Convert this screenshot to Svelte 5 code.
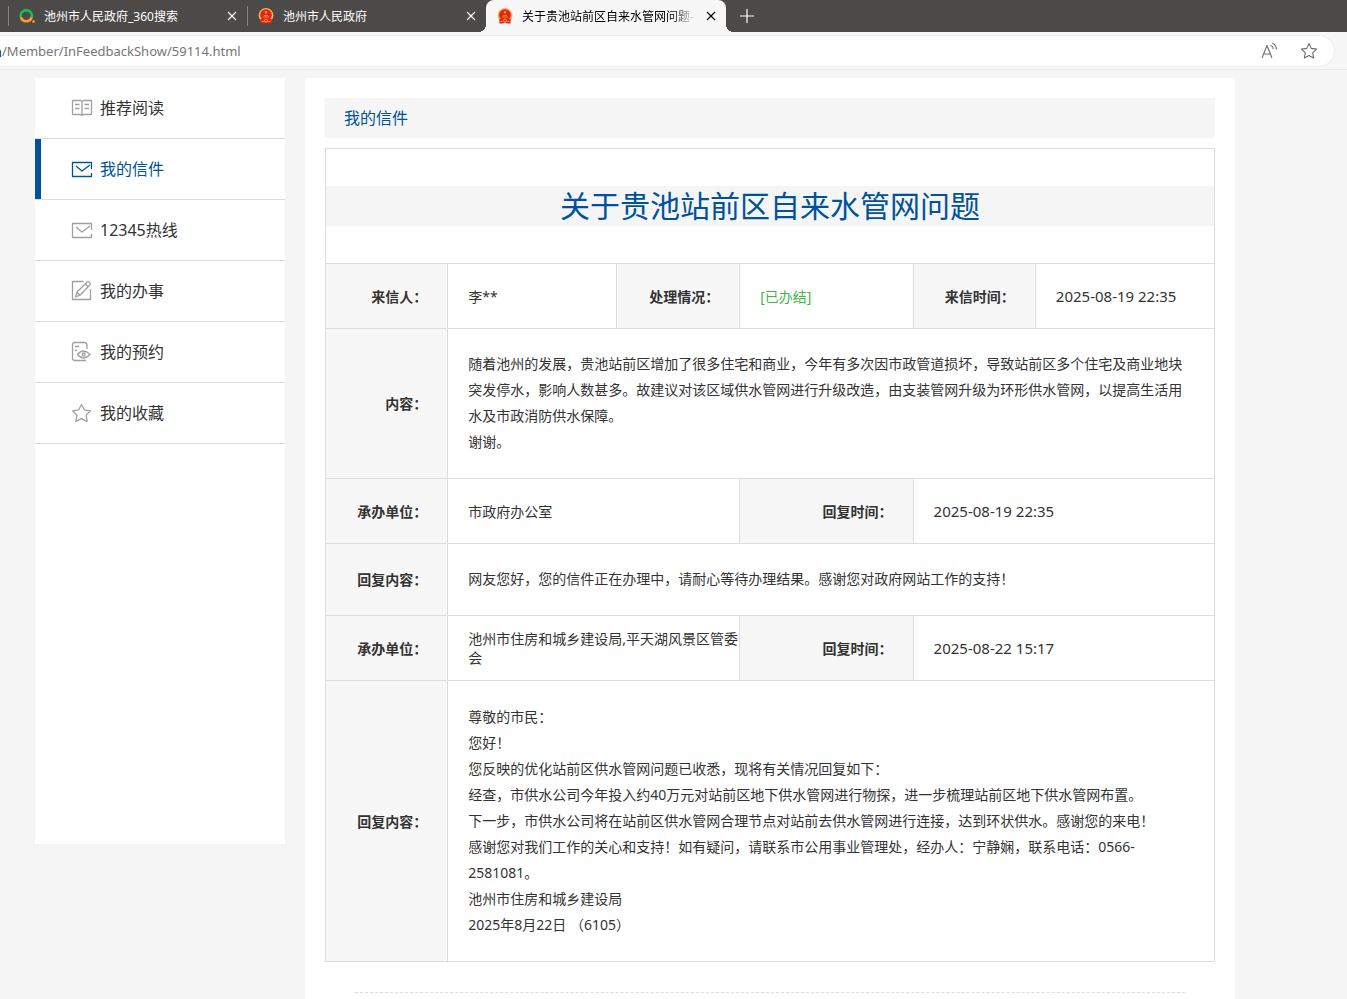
<script>
  const tabs = [
    { title: "池州市人民政府_360搜索", icon: "search" },
    { title: "池州市人民政府", icon: "emblem" },
    { title: "关于贵池站前区自来水管网问题-池州市人民政府", icon: "emblem", active: true },
  ];

  // left menu entries
  const menu = [
    { name: "推荐阅读", icon: "book" },
    { name: "我的信件", icon: "mail" },
    { name: "12345热线", icon: "mail" },
    { name: "我的办事", icon: "edit" },
    { name: "我的预约", icon: "booking" },
    { name: "我的收藏", icon: "star" },
  ];

  let current = "我的信件";
  let address = "/Member/InFeedbackShow/59114.html";

  const question = [
    "随着池州的发展，贵池站前区增加了很多住宅和商业，今年有多次因市政管道损坏，导致站前区多个住宅及商业地块突发停水，影响人数甚多。故建议对该区域供水管网进行升级改造，由支装管网升级为环形供水管网，以提高生活用水及市政消防供水保障。",
    "谢谢。",
  ];

  const answer = [
    "尊敬的市民：",
    "您好！",
    "您反映的优化站前区供水管网问题已收悉，现将有关情况回复如下：",
    "经查，市供水公司今年投入约40万元对站前区地下供水管网进行物探，进一步梳理站前区地下供水管网布置。",
    "下一步，市供水公司将在站前区供水管网合理节点对站前去供水管网进行连接，达到环状供水。感谢您的来电！",
    "感谢您对我们工作的关心和支持！如有疑问，请联系市公用事业管理处，经办人：宁静娴，联系电话：0566-2581081。",
    "池州市住房和城乡建设局",
    "2025年8月22日 （6105）",
  ];
</script>

<header class="browser">
  <div class="tabs">
    {#each tabs as tab}
      <div class="tab" class:active={tab.active}>
        {#if tab.icon == "search"}
          <svg class="favicon" viewBox="0 0 16 16">
            <path d="M1.9 9.2A5.6 5.6 0 1 1 12.7 9.2" fill="none" stroke="#19b955" stroke-width="2.6" />
            <path d="M1.9 9.2A5.6 5.6 0 0 0 12.7 9.2" fill="none" stroke="#ff9a2e" stroke-width="2.6" />
            <circle cx="14.6" cy="13.6" r="1.4" fill="#ff9a2e" />
          </svg>
        {:else}
          <svg class="favicon" viewBox="0 0 16 16">
            <circle cx="8" cy="7.4" r="7.4" fill="#f3b53f" />
            <circle cx="8" cy="7" r="5.8" fill="#e3221b" />
            <path d="M2.4 11h11.2v4.600h-3L8 14.800l-2.600.8h-3z" fill="#e3221b" />
            <path d="M8 2.600l.5 1.200h1.200l-1 .8.4 1.200L8 5.100l-1.100.7.4-1.200-1-.8h1.200z" fill="#f9c846" />
            <path d="M5 9h6M6 7.600h4" stroke="#f3a33a" stroke-width=".8" />
            <circle cx="8" cy="12.600" r="1.500" fill="none" stroke="#f3b53f" />
            <path d="M3.600 13.400h2M10.400 13.400h2" stroke="#f3b53f" />
          </svg>
        {/if}
        <button class="tab-title">{tab.title}</button>
        <button class="tab-close" aria-label="关闭标签页">
          <svg viewBox="0 0 10 10"><path d="M1 1l8 8M9 1l-8 8" /></svg>
        </button>
      </div>
    {/each}
    <button class="new-tab" aria-label="新建标签页">
      <svg viewBox="0 0 14 14"><path d="M7 0v14M0 7h14" /></svg>
    </button>
  </div>
  <div class="toolbar">
    <form class="address">
      <span class="domain">n</span>
      <input type="text" aria-label="地址" bind:value={address} />
      <button type="button" aria-label="朗读此页内容">
        <svg viewBox="0 0 18 18">
          <path d="M2 16L7 3.500L12 16M3.700 12h6.600M10.500 3.200c1.600.7 2.600 2 2.900 3.900M12.300 1c2.400 1.200 3.900 3.400 4.200 6.400" />
        </svg>
      </button>
      <button type="button" aria-label="收藏">
        <svg viewBox="0 0 18 18">
          <path d="M9 1.500l2.300 4.900 5.300.7-3.900 3.700 1 5.300L9 13.500l-4.700 2.600 1-5.300L1.400 7.100l5.300-.7z" />
        </svg>
      </button>
    </form>
  </div>
</header>

<div class="page">
  <nav class="sidebar">
    {#each menu as item}
      <a href="#{item.icon}" class:on={item.name == current} on:click|preventDefault={() => (current = item.name)}>
        <svg viewBox="0 0 22 22">
          {#if item.icon == "book"}
            <path d="M11 4v14M2 3.500h7.500L11 4.500l1.500-1H20a.5.5 0 0 1 .5.500v13a.5.5 0 0 1-.5.500h-7.500l-1.500 1-1.500-1H2a.5.5 0 0 1-.5-.5V4a.5.5 0 0 1 .5-.5zM4 7.500h4.500M4 11.500h4.500M13.500 7.500H18M13.500 11.500H18" />
          {:else if item.icon == "mail"}
            <path d="M20.500 11V4.500h-19v14h19V15M5 8l6 5 8-6" />
          {:else if item.icon == "edit"}
            <path d="M12.500 1.500h-11v18h18V9M4.500 17l1.500-5L16.500 1.800c1-.7 3.600 1.500 2.600 2.900L9 15.200zM14.500 4l2.600 2.700M6 12l3 3.200" />
          {:else if item.icon == "booking"}
            <path d="M16 8V4q0-2.500-2.500-2.500H3.500Q1.500 1.500 1.500 4v13q0 2.500 2.500 2.500h11M4 5.500h4M4 9.500h2M6.500 13.500q6-7 12.500 0-6.500 7-12.500 0z" />
            <circle cx="12.700" cy="13.500" r="1.500" />
          {:else}
            <path d="M10.500 2.500l2.800 5.300 6.200 1-4.400 4.300 1 6.300-5.600-2.700-5.600 2.700 1-6.300L1.500 8.800l6.200-1z" />
          {/if}
        </svg>
        {item.name}
      </a>
    {/each}
  </nav>

  <main class="content">
    <h2 class="column-title">我的信件</h2>

    <table>
      <colgroup>
        <col class="c1" /><col class="c2" /><col class="c3" /><col class="c4" /><col class="c5" /><col />
      </colgroup>
      <tbody>
        <tr class="title-row">
          <td colspan="6"><h1>关于贵池站前区自来水管网问题</h1></td>
        </tr>
        <tr>
          <th>来信人：</th>
          <td>李**</td>
          <th>处理情况：</th>
          <td class="done">[已办结]</td>
          <th>来信时间：</th>
          <td class="date">2025-08-19 22:35</td>
        </tr>
        <tr>
          <th>内容：</th>
          <td colspan="5" class="text">
            {#each question as line}<p>{line}</p>{/each}
          </td>
        </tr>
        <tr>
          <th>承办单位：</th>
          <td colspan="2">市政府办公室</td>
          <th>回复时间：</th>
          <td colspan="2" class="date">2025-08-19 22:35</td>
        </tr>
        <tr>
          <th>回复内容：</th>
          <td colspan="5" class="text">
            <p>网友您好，您的信件正在办理中，请耐心等待办理结果。感谢您对政府网站工作的支持！</p>
          </td>
        </tr>
        <tr>
          <th>承办单位：</th>
          <td colspan="2">池州市住房和城乡建设局,平天湖风景区管委会</td>
          <th>回复时间：</th>
          <td colspan="2" class="date">2025-08-22 15:17</td>
        </tr>
        <tr class="answer-row">
          <th>回复内容：</th>
          <td colspan="5" class="text">
            {#each answer as line}<p>{line}</p>{/each}
          </td>
        </tr>
      </tbody>
    </table>

    <hr />
  </main>
</div>

<style>
  :global(body) {
    margin: 0;
    background: #f5f5f5;
    color: #333;
    font: 14px/19px "Noto Sans", "Noto Sans CJK SC", sans-serif;
  }

  button {
    padding: 0;
    border: 0;
    background: none;
    color: inherit;
    font: inherit;
  }

  svg {
    display: block;
    flex: none;
  }

  /* browser bar */
  .tabs {
    display: flex;
    height: 32px;
    padding-left: 8px;
    background: #4b4a48;
    color: #fff;
    font-size: 12px;
  }

  .tab {
    position: relative;
    display: flex;
    align-items: center;
    box-sizing: border-box;
    width: 239px;
    padding: 0 10px 0 11px;
  }

  .tab:not(.active) {
    background: linear-gradient(#858483, #858483) 0 6px / 1px 20px no-repeat;
  }

  .tab.active {
    width: 240px;
    border-radius: 8px 8px 0 0;
    background: #f7f7f7;
    color: #000;
  }

  .tab.active::before,
  .tab.active::after {
    content: "";
    position: absolute;
    bottom: 0;
    left: -8px;
    width: 8px;
    height: 8px;
    background: radial-gradient(circle at 0 0, transparent 8px, #f7f7f7 8px);
  }

  .tab.active::after {
    left: 100%;
    background: radial-gradient(circle at 100% 0, transparent 8px, #f7f7f7 8px);
  }

  .favicon {
    width: 16px;
    height: 16px;
    margin-right: 9px;
  }

  .tab-title {
    flex: 1;
    overflow: hidden;
    text-align: left;
    white-space: nowrap;
  }

  .active .tab-title {
    -webkit-mask-image: linear-gradient(to right, #000 150px, transparent 174px);
    mask-image: linear-gradient(to right, #000 150px, transparent 174px);
  }

  .tab-close {
    margin-left: 10px;
  }

  .tab-close svg {
    width: 10px;
    height: 10px;
  }

  .tab-close path,
  .new-tab path {
    fill: none;
    stroke: currentColor;
    stroke-width: 1.2;
  }

  .new-tab {
    margin-left: 14px;
  }

  .new-tab svg {
    width: 14px;
    height: 14px;
  }

  .toolbar {
    padding: 4px 13px 3px 0;
    border-bottom: 1px solid #e9e9e9;
    background: #f7f7f7;
  }

  .address {
    display: flex;
    align-items: center;
    height: 30px;
    padding-right: 16px;
    border-radius: 0 15px 15px 0;
    background: #fff;
    box-shadow: 0 0 2px rgba(0, 0, 0, 0.12);
  }

  .domain {
    display: flex;
    justify-content: flex-end;
    width: 2px;
    overflow: hidden;
    color: #111;
  }

  .address input {
    flex: 1;
    padding: 0;
    border: 0;
    outline: 0;
    background: none;
    color: #767676;
    font: 13px/19px "Noto Sans", "Noto Sans CJK SC", sans-serif;
  }

  .address button {
    margin-left: 22px;
  }

  .address svg {
    width: 18px;
    height: 18px;
    fill: none;
    stroke: #6e6e6e;
    stroke-width: 1.1;
    stroke-linejoin: round;
  }

  /* page */
  .page {
    display: flex;
    align-items: flex-start;
    gap: 20px;
    padding: 8px 112px 0 35px;
  }

  .sidebar {
    flex: none;
    width: 250px;
    min-height: 766px;
    background: #fff;
  }

  .sidebar a {
    display: flex;
    align-items: center;
    gap: 7px;
    height: 60px;
    padding-left: 36px;
    border-bottom: 1px solid #ddd;
    color: #333;
    font-size: 16px;
    text-decoration: none;
  }

  .sidebar a.on {
    box-shadow: inset 6px 0 #00539a;
    color: #00539a;
  }

  .sidebar svg {
    width: 22px;
    height: 22px;
    fill: none;
    stroke: #a0a0a0;
    stroke-width: 1.3;
    stroke-linejoin: round;
  }

  .sidebar .on svg {
    stroke: #00539a;
  }

  .content {
    flex: 1;
    min-width: 0;
    padding: 20px 20px 40px;
    background: #fff;
  }

  h1,
  h2 {
    margin: 0;
    background: #f5f5f5;
    color: #00539a;
    font-weight: normal;
    line-height: 40px;
  }

  .column-title {
    margin-bottom: 10px;
    padding-left: 19px;
    font-size: 16px;
  }

  h1 {
    font-size: 30px;
    text-align: center;
  }

  table {
    width: 100%;
    border-collapse: collapse;
    table-layout: fixed;
  }

  .c1,
  .c5 {
    width: 13.75%;
  }

  .c2 {
    width: 19%;
  }

  .c3 {
    width: 13.85%;
  }

  .c4 {
    width: 19.5%;
  }

  tr {
    height: 65px;
  }

  .title-row {
    height: 115px;
  }

  .answer-row {
    height: 281px;
  }

  th,
  td {
    padding: 0 0 0 20px;
    border: 1px solid #ddd;
    text-align: left;
  }

  th {
    padding: 0 20px 0 0;
    background: #f7f7f7;
    text-align: right;
  }

  .title-row td {
    padding: 0;
  }

  .done {
    color: #3fb54a;
  }

  .date {
    font-size: 15px;
  }

  .text {
    padding: 22px 20px 23px;
    line-height: 26px;
  }

  p {
    margin: 0;
  }

  hr {
    margin: 30px 30px 0;
    border: 0;
    border-top: 1px dashed #ddd;
  }
</style>
